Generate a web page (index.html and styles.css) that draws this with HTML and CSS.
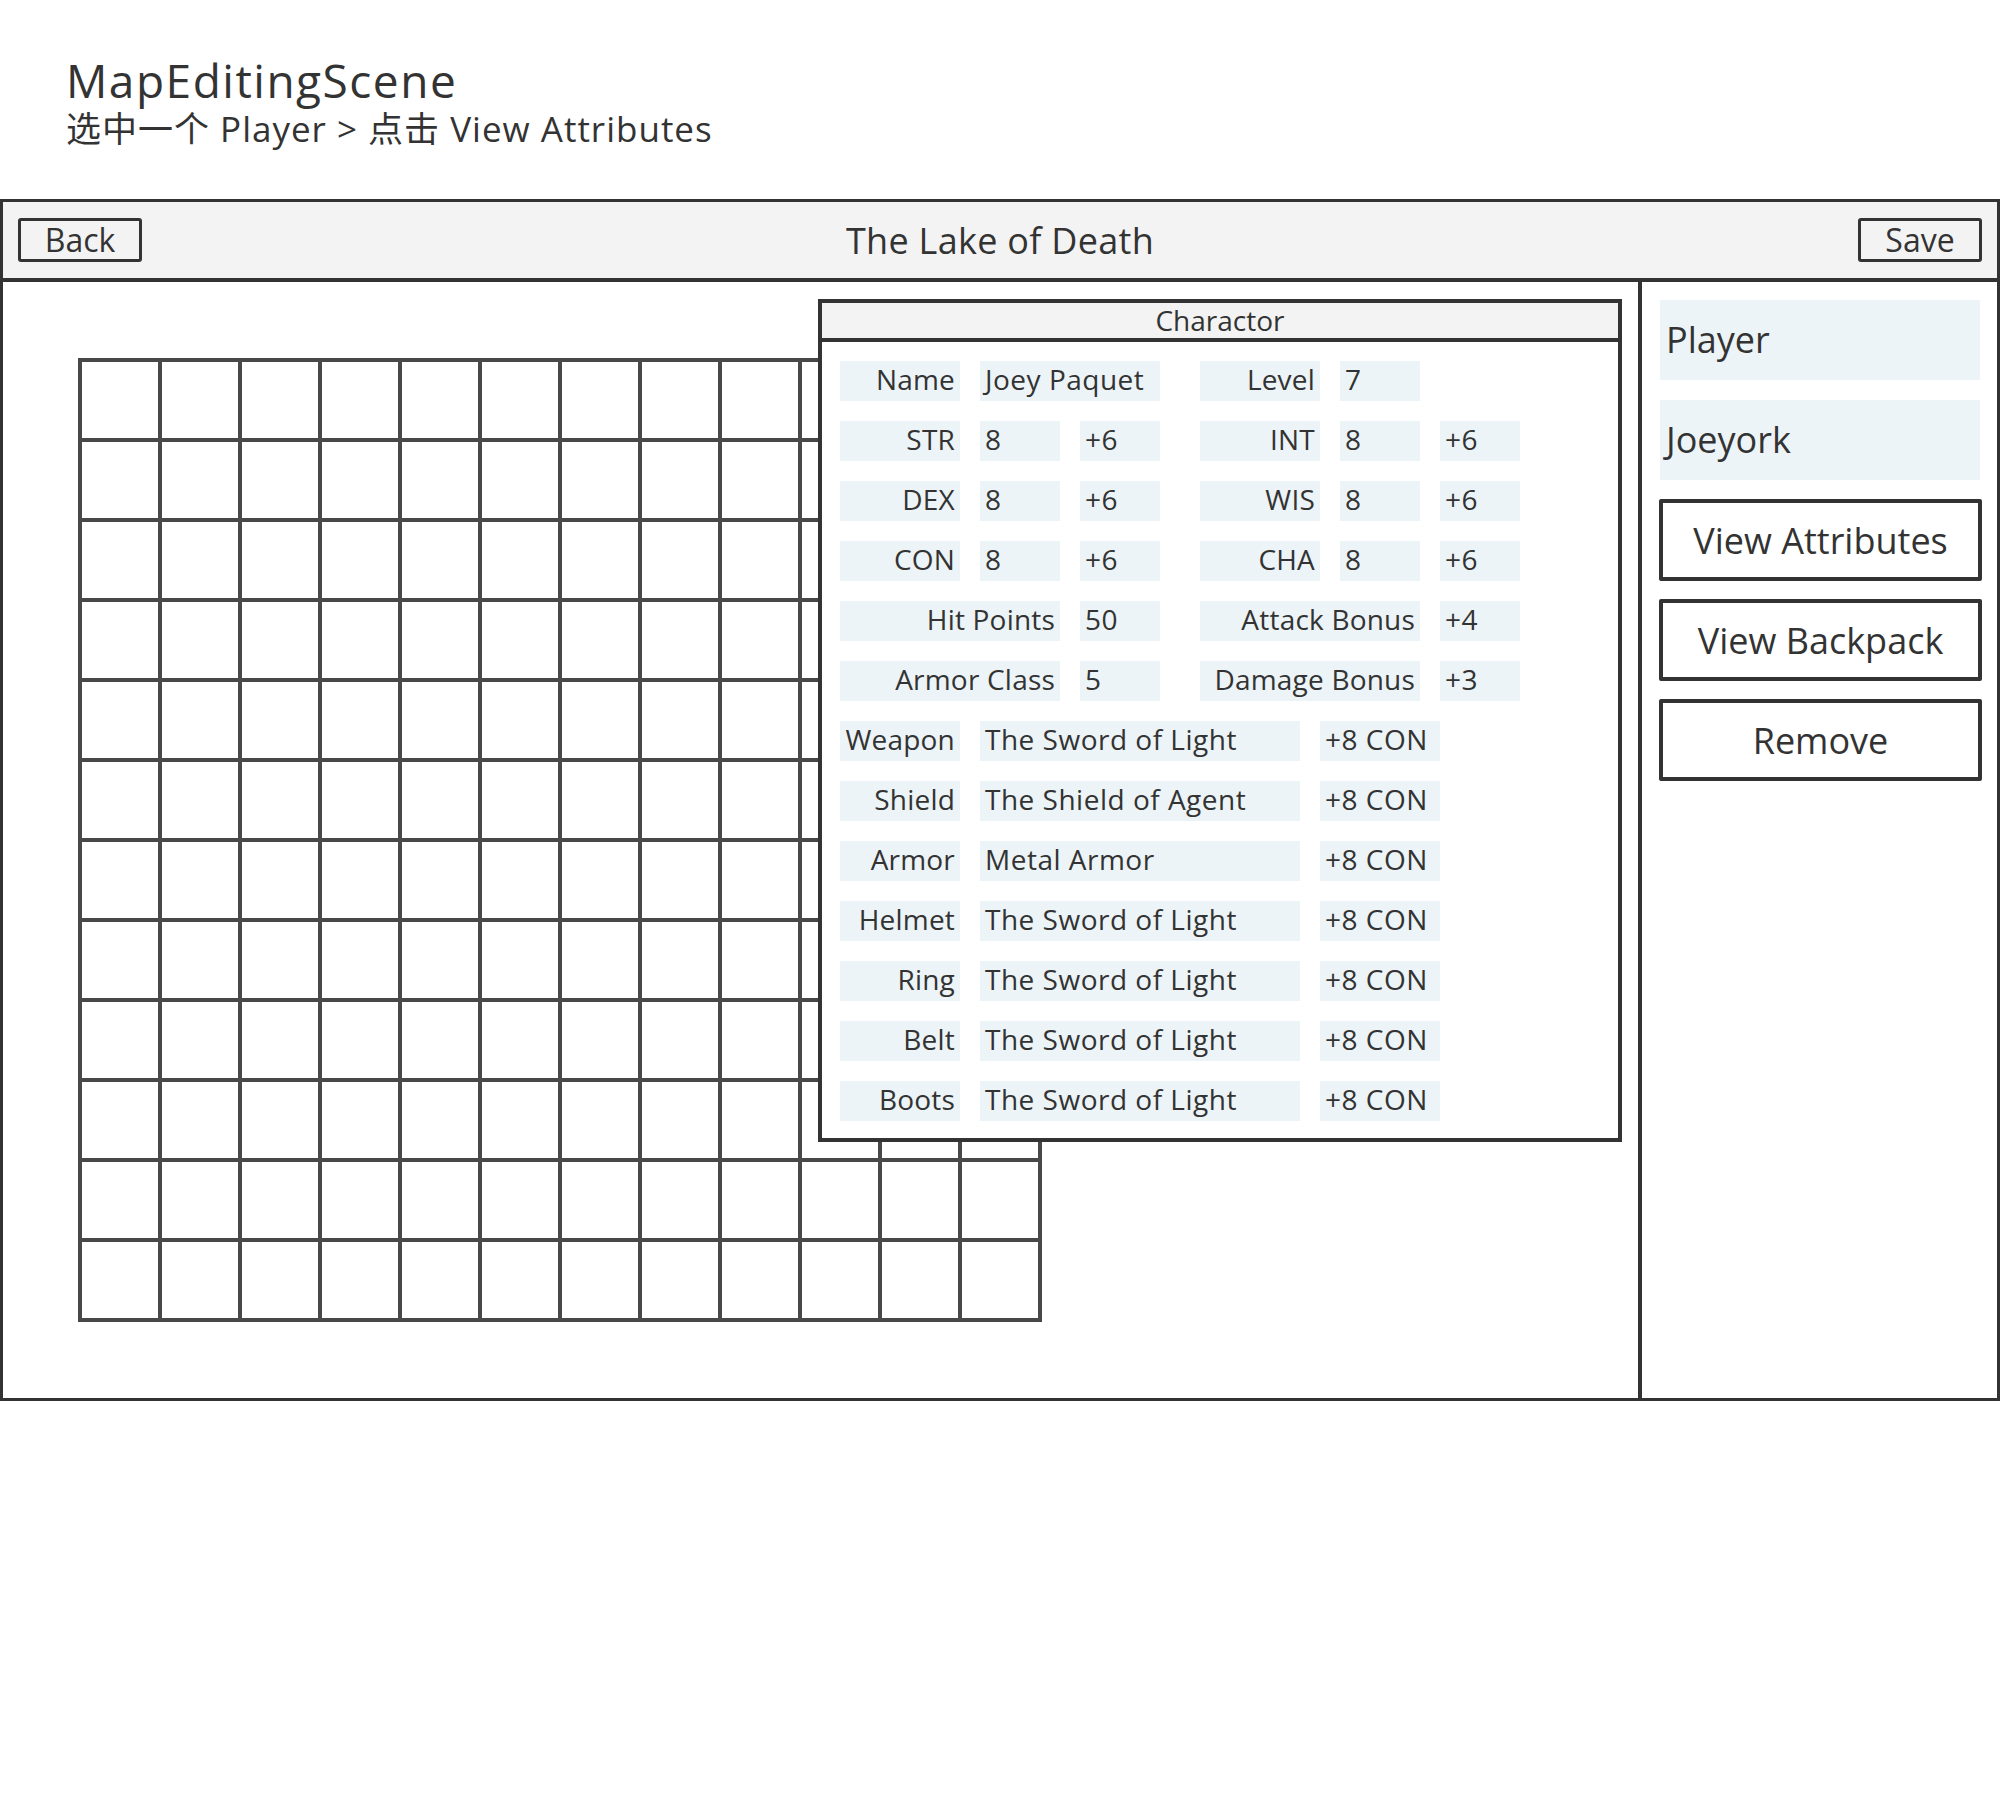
FILE: index.html
```html
<!DOCTYPE html>
<html lang="zh-CN">
<head>
<meta charset="utf-8">
<title>MapEditingScene</title>
<link rel="stylesheet" href="styles.css">
</head>
<body>
<header class="intro">
  <h1 class="scene-title">MapEditingScene</h1>
  <p class="scene-path">选中一个 Player &gt; 点击 View Attributes</p>
</header>

<div class="frame">
  <div class="toolbar">
    <button class="tool-btn">Back</button>
    <div class="toolbar-title">The Lake of Death</div>
    <button class="tool-btn">Save</button>
  </div>
  <div class="main">
    <div class="map-area">
      <div class="map-grid"></div>

      <section class="char-panel">
        <div class="char-head">Charactor</div>
        <div class="char-body">
          <div class="row">
            <div class="cell lbl w120">Name</div>
            <div class="cell w180">Joey Paquet</div>
            <div class="cell lbl w120 sep">Level</div>
            <div class="cell w80">7</div>
          </div>
          <div class="row">
            <div class="cell lbl w120">STR</div>
            <div class="cell w80">8</div>
            <div class="cell w80">+6</div>
            <div class="cell lbl w120 sep">INT</div>
            <div class="cell w80">8</div>
            <div class="cell w80">+6</div>
          </div>
          <div class="row">
            <div class="cell lbl w120">DEX</div>
            <div class="cell w80">8</div>
            <div class="cell w80">+6</div>
            <div class="cell lbl w120 sep">WIS</div>
            <div class="cell w80">8</div>
            <div class="cell w80">+6</div>
          </div>
          <div class="row">
            <div class="cell lbl w120">CON</div>
            <div class="cell w80">8</div>
            <div class="cell w80">+6</div>
            <div class="cell lbl w120 sep">CHA</div>
            <div class="cell w80">8</div>
            <div class="cell w80">+6</div>
          </div>
          <div class="row">
            <div class="cell lbl w220">Hit Points</div>
            <div class="cell w80">50</div>
            <div class="cell lbl w220 sep">Attack Bonus</div>
            <div class="cell w80">+4</div>
          </div>
          <div class="row">
            <div class="cell lbl w220">Armor Class</div>
            <div class="cell w80">5</div>
            <div class="cell lbl w220 sep">Damage Bonus</div>
            <div class="cell w80">+3</div>
          </div>
          <div class="row">
            <div class="cell lbl w120">Weapon</div>
            <div class="cell w320">The Sword of Light</div>
            <div class="cell w120">+8 CON</div>
          </div>
          <div class="row">
            <div class="cell lbl w120">Shield</div>
            <div class="cell w320">The Shield of Agent</div>
            <div class="cell w120">+8 CON</div>
          </div>
          <div class="row">
            <div class="cell lbl w120">Armor</div>
            <div class="cell w320">Metal Armor</div>
            <div class="cell w120">+8 CON</div>
          </div>
          <div class="row">
            <div class="cell lbl w120">Helmet</div>
            <div class="cell w320">The Sword of Light</div>
            <div class="cell w120">+8 CON</div>
          </div>
          <div class="row">
            <div class="cell lbl w120">Ring</div>
            <div class="cell w320">The Sword of Light</div>
            <div class="cell w120">+8 CON</div>
          </div>
          <div class="row">
            <div class="cell lbl w120">Belt</div>
            <div class="cell w320">The Sword of Light</div>
            <div class="cell w120">+8 CON</div>
          </div>
          <div class="row">
            <div class="cell lbl w120">Boots</div>
            <div class="cell w320">The Sword of Light</div>
            <div class="cell w120">+8 CON</div>
          </div>
        </div>
      </section>
    </div>

    <aside class="side">
      <div class="side-field">Player</div>
      <div class="side-field">Joeyork</div>
      <button class="side-btn">View Attributes</button>
      <button class="side-btn">View Backpack</button>
      <button class="side-btn">Remove</button>
    </aside>
  </div>
</div>
</body>
</html>
```

FILE: styles.css
```css
* {
  box-sizing: border-box;
}

body {
  margin: 0;
  background: #ffffff;
  color: #333333;
  font-family: "Open Sans", "Noto Sans CJK SC", sans-serif;
}

.intro {
  padding: 54px 0 0 66px;
}

.scene-title {
  margin: 0;
  font-size: 46px;
  line-height: 52px;
  font-weight: 400;
  letter-spacing: 1.5px;
}

.scene-path {
  margin: 3px 0 0;
  font-size: 35px;
  line-height: 40px;
  letter-spacing: 1px;
  font-family: "Open Sans", "Noto Sans CJK SC", sans-serif;
}

.frame {
  margin-top: 50px;
  width: 2000px;
  border: 3px solid #333333;
}

.toolbar {
  display: flex;
  align-items: center;
  height: 80px;
  padding: 0 15px;
  background: #f3f3f3;
  border-bottom: 4px solid #333333;
}

.tool-btn {
  width: 124px;
  height: 44px;
  padding: 0;
  border: 3px solid #333333;
  border-radius: 3px;
  background: transparent;
  color: #333333;
  font-family: "Open Sans", sans-serif;
  font-size: 32px;
  line-height: 36px;
}

.toolbar-title {
  flex: 1;
  text-align: center;
  font-size: 36px;
  letter-spacing: 0.3px;
}

.main {
  display: flex;
  height: 1116px;
}

.map-area {
  position: relative;
  flex: 1;
  padding: 76px 0 0 75px;
}

.map-grid {
  width: 964px;
  height: 964px;
  background-image:
    linear-gradient(#484848 4px, transparent 4px),
    linear-gradient(90deg, #484848 4px, transparent 4px);
  background-size: 80px 80px;
}

.char-panel {
  position: absolute;
  left: 815px;
  top: 17px;
  width: 804px;
  height: 843px;
  border: 4px solid #333333;
  background: #ffffff;
}

.char-head {
  height: 39px;
  background: #f3f3f3;
  border-bottom: 4px solid #333333;
  text-align: center;
  font-size: 28px;
  line-height: 35px;
}

.char-body {
  display: flex;
  flex-direction: column;
  gap: 20px;
  padding: 19px 0 0 18px;
}

.row {
  display: flex;
  gap: 20px;
  height: 40px;
}

.cell {
  height: 40px;
  padding: 0 5px;
  background: #ecf4f7;
  font-size: 28px;
  line-height: 36px;
  letter-spacing: 0.5px;
  white-space: nowrap;
}

.lbl {
  text-align: right;
  letter-spacing: 0.2px;
}

.sep {
  margin-left: 20px;
}

.w80 { width: 80px; }
.w120 { width: 120px; }
.w180 { width: 180px; }
.w220 { width: 220px; }
.w320 { width: 320px; }

.side {
  width: 359px;
  border-left: 4px solid #333333;
  padding: 18px 0 0 18px;
  display: flex;
  flex-direction: column;
  gap: 20px;
}

.side-field {
  width: 320px;
  height: 80px;
  padding-left: 6px;
  background: #ecf4f7;
  font-size: 36px;
  line-height: 80px;
}

.side-btn {
  width: 323px;
  height: 82px;
  margin: -1px 0 -1px -1px;
  padding: 0;
  border: 4px solid #333333;
  border-radius: 2px;
  background: #ffffff;
  color: #333333;
  font-family: "Open Sans", sans-serif;
  font-size: 36px;
}
```
